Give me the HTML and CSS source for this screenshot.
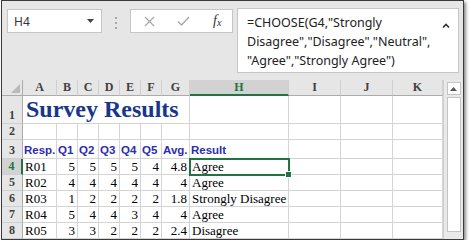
FILE: index.html
```html
<!DOCTYPE html>
<html lang="en">
<head>
  <meta charset="UTF-8">
  <meta name="viewport" content="width=device-width, initial-scale=1.0">
  <title>Survey Results</title>
  <link rel="stylesheet" href="styles.css">
</head>
<body>
  <div class="window">
    <div class="formula-bar">
      <div class="name-box">
        <span>H4</span>
        <svg class="drop" width="7" height="4" viewBox="0 0 7 4"><path d="M0 0h7L3.5 4z" fill="#444"/></svg>
      </div>
      <div class="grip"><i></i><i></i><i></i></div>
      <div class="fx-buttons">
        <svg width="11" height="11" viewBox="0 0 11 11"><path d="M1 1l9 9M10 1l-9 9" stroke="#a6a6a6" stroke-width="1.2" fill="none"/></svg>
        <svg width="13" height="10" viewBox="0 0 13 10"><path d="M1 5.5l3.5 3.5L12 1" stroke="#a6a6a6" stroke-width="1.3" fill="none"/></svg>
        <span class="fx">f<sub>x</sub></span>
      </div>
      <div class="formula">
        <div class="formula-text">=CHOOSE(G4,"Strongly<br>Disagree","Disagree","Neutral",<br>"Agree","Strongly Agree")</div>
        <svg class="caret" width="8" height="5" viewBox="0 0 8 5"><path d="M1 4.5L4 1.5l3 3" stroke="#333" stroke-width="1.6" fill="none"/></svg>
      </div>
    </div>

    <div class="sheet">
      <div class="grid">
        <!-- column headers -->
        <div class="corner"></div>
        <div class="col-head">A</div>
        <div class="col-head">B</div>
        <div class="col-head">C</div>
        <div class="col-head">D</div>
        <div class="col-head">E</div>
        <div class="col-head">F</div>
        <div class="col-head">G</div>
        <div class="col-head selected">H</div>
        <div class="col-head">I</div>
        <div class="col-head">J</div>
        <div class="col-head">K</div>

        <!-- row 1 -->
        <div class="row-head">1</div>
        <div class="cell title">Survey Results</div>
        <div class="cell"></div>
        <div class="cell"></div>
        <div class="cell"></div>
        <div class="cell"></div>

        <!-- row 2 -->
        <div class="row-head">2</div>
        <div class="cell"></div><div class="cell"></div><div class="cell"></div><div class="cell"></div>
        <div class="cell"></div><div class="cell"></div><div class="cell"></div><div class="cell"></div>
        <div class="cell"></div><div class="cell"></div><div class="cell"></div>

        <!-- row 3 -->
        <div class="row-head">3</div>
        <div class="cell label">Resp.</div>
        <div class="cell label">Q1</div>
        <div class="cell label">Q2</div>
        <div class="cell label">Q3</div>
        <div class="cell label">Q4</div>
        <div class="cell label">Q5</div>
        <div class="cell label">Avg.</div>
        <div class="cell label">Result</div>
        <div class="cell"></div><div class="cell"></div><div class="cell"></div>

        <!-- row 4 -->
        <div class="row-head selected">4</div>
        <div class="cell">R01</div>
        <div class="cell num">5</div>
        <div class="cell num">5</div>
        <div class="cell num">5</div>
        <div class="cell num">5</div>
        <div class="cell num">4</div>
        <div class="cell num">4.8</div>
        <div class="cell active">Agree<span class="handle"></span></div>
        <div class="cell"></div><div class="cell"></div><div class="cell"></div>

        <!-- row 5 -->
        <div class="row-head">5</div>
        <div class="cell">R02</div>
        <div class="cell num">4</div>
        <div class="cell num">4</div>
        <div class="cell num">4</div>
        <div class="cell num">4</div>
        <div class="cell num">4</div>
        <div class="cell num">4</div>
        <div class="cell">Agree</div>
        <div class="cell"></div><div class="cell"></div><div class="cell"></div>

        <!-- row 6 -->
        <div class="row-head">6</div>
        <div class="cell">R03</div>
        <div class="cell num">1</div>
        <div class="cell num">2</div>
        <div class="cell num">2</div>
        <div class="cell num">2</div>
        <div class="cell num">2</div>
        <div class="cell num">1.8</div>
        <div class="cell">Strongly Disagree</div>
        <div class="cell"></div><div class="cell"></div><div class="cell"></div>

        <!-- row 7 -->
        <div class="row-head">7</div>
        <div class="cell">R04</div>
        <div class="cell num">5</div>
        <div class="cell num">4</div>
        <div class="cell num">4</div>
        <div class="cell num">3</div>
        <div class="cell num">4</div>
        <div class="cell num">4</div>
        <div class="cell">Agree</div>
        <div class="cell"></div><div class="cell"></div><div class="cell"></div>

        <!-- row 8 -->
        <div class="row-head">8</div>
        <div class="cell">R05</div>
        <div class="cell num">3</div>
        <div class="cell num">3</div>
        <div class="cell num">2</div>
        <div class="cell num">2</div>
        <div class="cell num">2</div>
        <div class="cell num">2.4</div>
        <div class="cell">Disagree</div>
        <div class="cell"></div><div class="cell"></div><div class="cell"></div>
      </div>

      <div class="scrollbar">
        <div class="scroll-up">
          <svg width="7" height="4" viewBox="0 0 7 4"><path d="M0 4h7L3.5 0z" fill="#555"/></svg>
        </div>
        <div class="scroll-thumb"></div>
      </div>
    </div>
  </div>
</body>
</html>
```

FILE: styles.css
```css
body {
  margin: 0;
  background: #fff;
  font-family: "Liberation Serif", serif;
}
.window {
  margin-left: 1px;
  width: 463px;
  height: 240px;
  box-sizing: border-box;
  border: 1px solid #3a3a3a;
  box-shadow: 2px 2px 3px rgba(0, 0, 0, 0.45);
  background: #e6e6e6;
  display: flex;
  flex-direction: column;
  overflow: hidden;
}

/* formula bar */
.formula-bar {
  height: 79px;
  box-sizing: border-box;
  display: flex;
  align-items: flex-start;
  padding: 7px 0 0 5px;
  font-family: "Noto Sans", sans-serif;
}
.name-box {
  margin-top: 1px;
  width: 95px;
  height: 24px;
  box-sizing: border-box;
  background: #fff;
  border: 1px solid #c6c6c6;
  display: flex;
  align-items: center;
  justify-content: space-between;
  padding: 0 7px 0 6px;
  font-size: 12px;
  color: #333;
}
.grip {
  width: 28px;
  display: flex;
  flex-direction: column;
  align-items: center;
  gap: 3px;
  padding-top: 9px;
}
.grip i {
  width: 2px;
  height: 2px;
  background: #a8a8a8;
}
.fx-buttons {
  margin-top: 1px;
  width: 103px;
  height: 24px;
  box-sizing: border-box;
  background: #fff;
  border: 1px solid #c6c6c6;
  display: flex;
  align-items: center;
  padding: 0 0 0 13px;
}
.fx-buttons svg:first-child {
  margin-right: 22px;
}
.fx-buttons svg:nth-child(2) {
  margin-right: 23px;
}
.fx {
  font-family: "Liberation Serif", serif;
  font-style: italic;
  font-size: 14px;
  color: #333;
}
.fx sub {
  font-size: 10px;
  vertical-align: -1px;
}
.formula {
  margin-left: 4px;
  width: 222px;
  height: 65px;
  box-sizing: border-box;
  background: #fff;
  border: 1px solid #c6c6c6;
  display: flex;
  justify-content: space-between;
  padding: 4px 8px 0 9px;
}
.formula-text {
  font-size: 12.5px;
  line-height: 19px;
  color: #222;
}
.caret {
  margin-top: 10px;
}

/* sheet */
.sheet {
  flex: 1;
  display: flex;
  background: #fff;
}
.grid {
  display: grid;
  grid-template-columns: 21px 34px 21px 21px 21px 21px 21px 28px 99px 52px 52px 50px;
  grid-template-rows: 16px 28px 16px 19px 16px 16px 16px 16px 16px;
}
.corner,
.col-head,
.row-head {
  background: #e6e6e6;
  box-sizing: border-box;
  font-weight: bold;
  font-size: 12px;
  color: #404040;
  display: flex;
  justify-content: center;
}
.corner {
  position: relative;
  border-right: 1px solid #ababab;
  border-bottom: 1px solid #ababab;
}
.corner::after {
  content: "";
  position: absolute;
  right: 2px;
  bottom: 2px;
  border-left: 9px solid transparent;
  border-bottom: 9px solid #b9b9b9;
}
.col-head {
  align-items: center;
  border-right: 1px solid #cfcfcf;
  border-bottom: 1px solid #ababab;
}
.col-head.selected {
  background: #d2d2d2;
  color: #217346;
  border-bottom: 2px solid #217346;
}
.row-head {
  align-items: flex-end;
  border-right: 1px solid #ababab;
  border-bottom: 1px solid #cfcfcf;
}
.row-head.selected {
  background: #d2d2d2;
  color: #217346;
  border-right: 2px solid #217346;
}
.cell {
  box-sizing: border-box;
  border-right: 1px solid #d4d4d4;
  border-bottom: 1px solid #d4d4d4;
  display: flex;
  align-items: flex-end;
  padding: 0 2px;
  font-size: 13px;
  line-height: 15px;
  color: #000;
  white-space: nowrap;
}
.cell.num {
  justify-content: flex-end;
}
.cell.title {
  grid-column: span 7;
  font-size: 24px;
  line-height: 28px;
  font-weight: bold;
  color: #18378a;
  padding-left: 3px;
}
.cell.label {
  font-family: "Liberation Sans", sans-serif;
  font-weight: bold;
  font-size: 11.5px;
  color: #2c2cb0;
  padding-left: 1px;
}
.cell.active {
  position: relative;
  outline: 2px solid #217346;
  outline-offset: -1px;
  z-index: 1;
}
.handle {
  position: absolute;
  right: -4px;
  bottom: -4px;
  width: 5px;
  height: 5px;
  background: #217346;
  border: 1px solid #fff;
}

/* scroll bar */
.scrollbar {
  flex: 1;
  background: #e9e9e9;
  border-left: 1px solid #d0d0d0;
  display: flex;
  flex-direction: column;
  align-items: center;
  padding-top: 2px;
}
.scroll-up {
  width: 14px;
  height: 13px;
  box-sizing: border-box;
  background: #fff;
  border: 1px solid #c4c4c4;
  display: flex;
  align-items: center;
  justify-content: center;
}
.scroll-thumb {
  margin-top: 2px;
  width: 14px;
  height: 135px;
  box-sizing: border-box;
  background: #fff;
  border: 1px solid #c4c4c4;
}
```
